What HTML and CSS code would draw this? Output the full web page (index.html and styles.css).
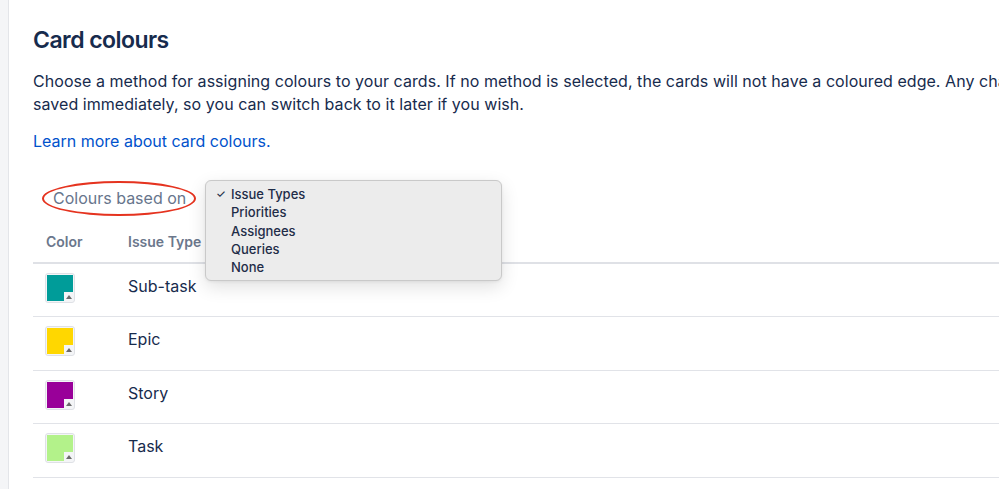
FILE: index.html
```html
<!DOCTYPE html>
<html lang="en">
<head>
<meta charset="utf-8">
<title>Card colours</title>
<link rel="stylesheet" href="styles.css">
</head>
<body>
<div class="page">
  <aside class="sidebar"></aside>
  <main class="main">
    <h1 class="title">Card colours</h1>
    <p class="intro">Choose a method for assigning colours to your cards. If no method is selected, the cards will not have a coloured edge. Any changes are<br>saved immediately, so you can switch back to it later if you wish.</p>
    <a class="learn" href="#">Learn more about card colours.</a>

    <div class="based">
      <span class="based-label">Colours based on</span>
      <span class="annotation"></span>
      <ul class="menu">
        <li class="menu-item checked"><span class="check">✓</span>Issue Types</li>
        <li class="menu-item">Priorities</li>
        <li class="menu-item">Assignees</li>
        <li class="menu-item">Queries</li>
        <li class="menu-item">None</li>
      </ul>
    </div>

    <div class="table">
      <div class="row head">
        <div class="c1">Color</div>
        <div class="c2">Issue Type</div>
      </div>
      <div class="row">
        <div class="c1"><span class="swatch"><span class="fill teal"></span><span class="corner"></span></span></div>
        <div class="c2 name">Sub-task</div>
      </div>
      <div class="row">
        <div class="c1"><span class="swatch"><span class="fill yellow"></span><span class="corner"></span></span></div>
        <div class="c2 name">Epic</div>
      </div>
      <div class="row">
        <div class="c1"><span class="swatch"><span class="fill purple"></span><span class="corner"></span></span></div>
        <div class="c2 name">Story</div>
      </div>
      <div class="row">
        <div class="c1"><span class="swatch"><span class="fill green"></span><span class="corner"></span></span></div>
        <div class="c2 name">Task</div>
      </div>
    </div>
  </main>
</div>
</body>
</html>
```

FILE: styles.css
```css
html, body {
  margin: 0;
  padding: 0;
  overflow: hidden;
  background: #fff;
}
body {
  font-family: Inter, "Noto Sans", sans-serif;
  color: #172b4d;
  width: 999px;
  height: 489px;
}
.page {
  display: flex;
  width: 1300px;
  height: 489px;
}
.sidebar {
  width: 8px;
  flex: none;
  background: #f4f5f7;
  border-right: 1px solid #e3e5e9;
}
.main {
  flex: 1;
  padding-left: 24px;
}
.title {
  margin: 26px 0 0;
  font-size: 23px;
  line-height: 28px;
  font-weight: 600;
  letter-spacing: -0.55px;
  color: #172b4d;
}
.intro {
  margin: 16px 0 0;
  font-size: 16px;
  line-height: 23px;
  letter-spacing: 0.05px;
  white-space: nowrap;
}
.learn {
  display: block;
  margin-top: 13px;
  font-size: 16px;
  line-height: 24px;
  color: #0052cc;
  text-decoration: none;
}
.based {
  position: relative;
  margin-top: 33px;
  height: 24px;
}
.based-label {
  display: inline-block;
  margin-left: 20px;
  font-size: 16px;
  line-height: 24px;
  color: #67758c;
}
.annotation {
  position: absolute;
  left: 9px;
  top: -5px;
  width: 154px;
  height: 35px;
  border: 2px solid #e5331f;
  border-radius: 50%;
  box-sizing: border-box;
}
.menu {
  position: absolute;
  left: 172px;
  top: -6px;
  width: 297px;
  height: 101px;
  box-sizing: border-box;
  margin: 0;
  padding: 4px 0 0 25px;
  list-style: none;
  background: #ececec;
  border: 1px solid #c9c9c9;
  border-radius: 6px;
  box-shadow: 0 6px 18px rgba(0, 0, 0, 0.12), 0 1px 3px rgba(0, 0, 0, 0.06);
  z-index: 2;
}
.menu-item {
  position: relative;
  font-size: 13px;
  line-height: 18.3px;
  font-weight: 500;
  color: #1f2c48;
}
.check {
  position: absolute;
  left: -15px;
  top: 0;
  font-size: 11px;
}
.table {
  margin-top: 14px;
}
.row {
  display: flex;
  height: 52.4px;
  padding-left: 13px;
  border-bottom: 1px solid #e1e3e8;
}
.row.head {
  height: 38px;
  border-bottom: 2px solid #dfe1e6;
  font-size: 14px;
  font-weight: 600;
  color: #6b778c;
  line-height: 20px;
}
.head .c1, .head .c2 {
  padding-top: 8px;
}
.c1 {
  width: 82px;
  flex: none;
}
.row:not(.head) .c1 {
  padding-top: 9px;
}
.name {
  padding-top: 10px;
  font-size: 16px;
  line-height: 24px;
  color: #172b4d;
}
.swatch {
  position: relative;
  display: block;
  width: 30px;
  height: 30px;
  margin-left: -1px;
  box-sizing: border-box;
  border: 1px solid #dfe1e6;
  border-radius: 3px;
  background: #f4f5f7;
  padding: 1px;
}
.fill {
  display: block;
  width: 26px;
  height: 26px;
}
.corner {
  position: absolute;
  right: 1px;
  bottom: 1px;
  width: 9px;
  height: 9px;
  background: #f4f5f7;
}
.corner::after {
  content: "";
  position: absolute;
  left: 2px;
  top: 3px;
  border-left: 3px solid transparent;
  border-right: 3px solid transparent;
  border-bottom: 4px solid #6b6b6b;
}
.teal { background: #009c99; }
.yellow { background: #ffd700; }
.purple { background: #990099; }
.green { background: #b3f28a; }
```
